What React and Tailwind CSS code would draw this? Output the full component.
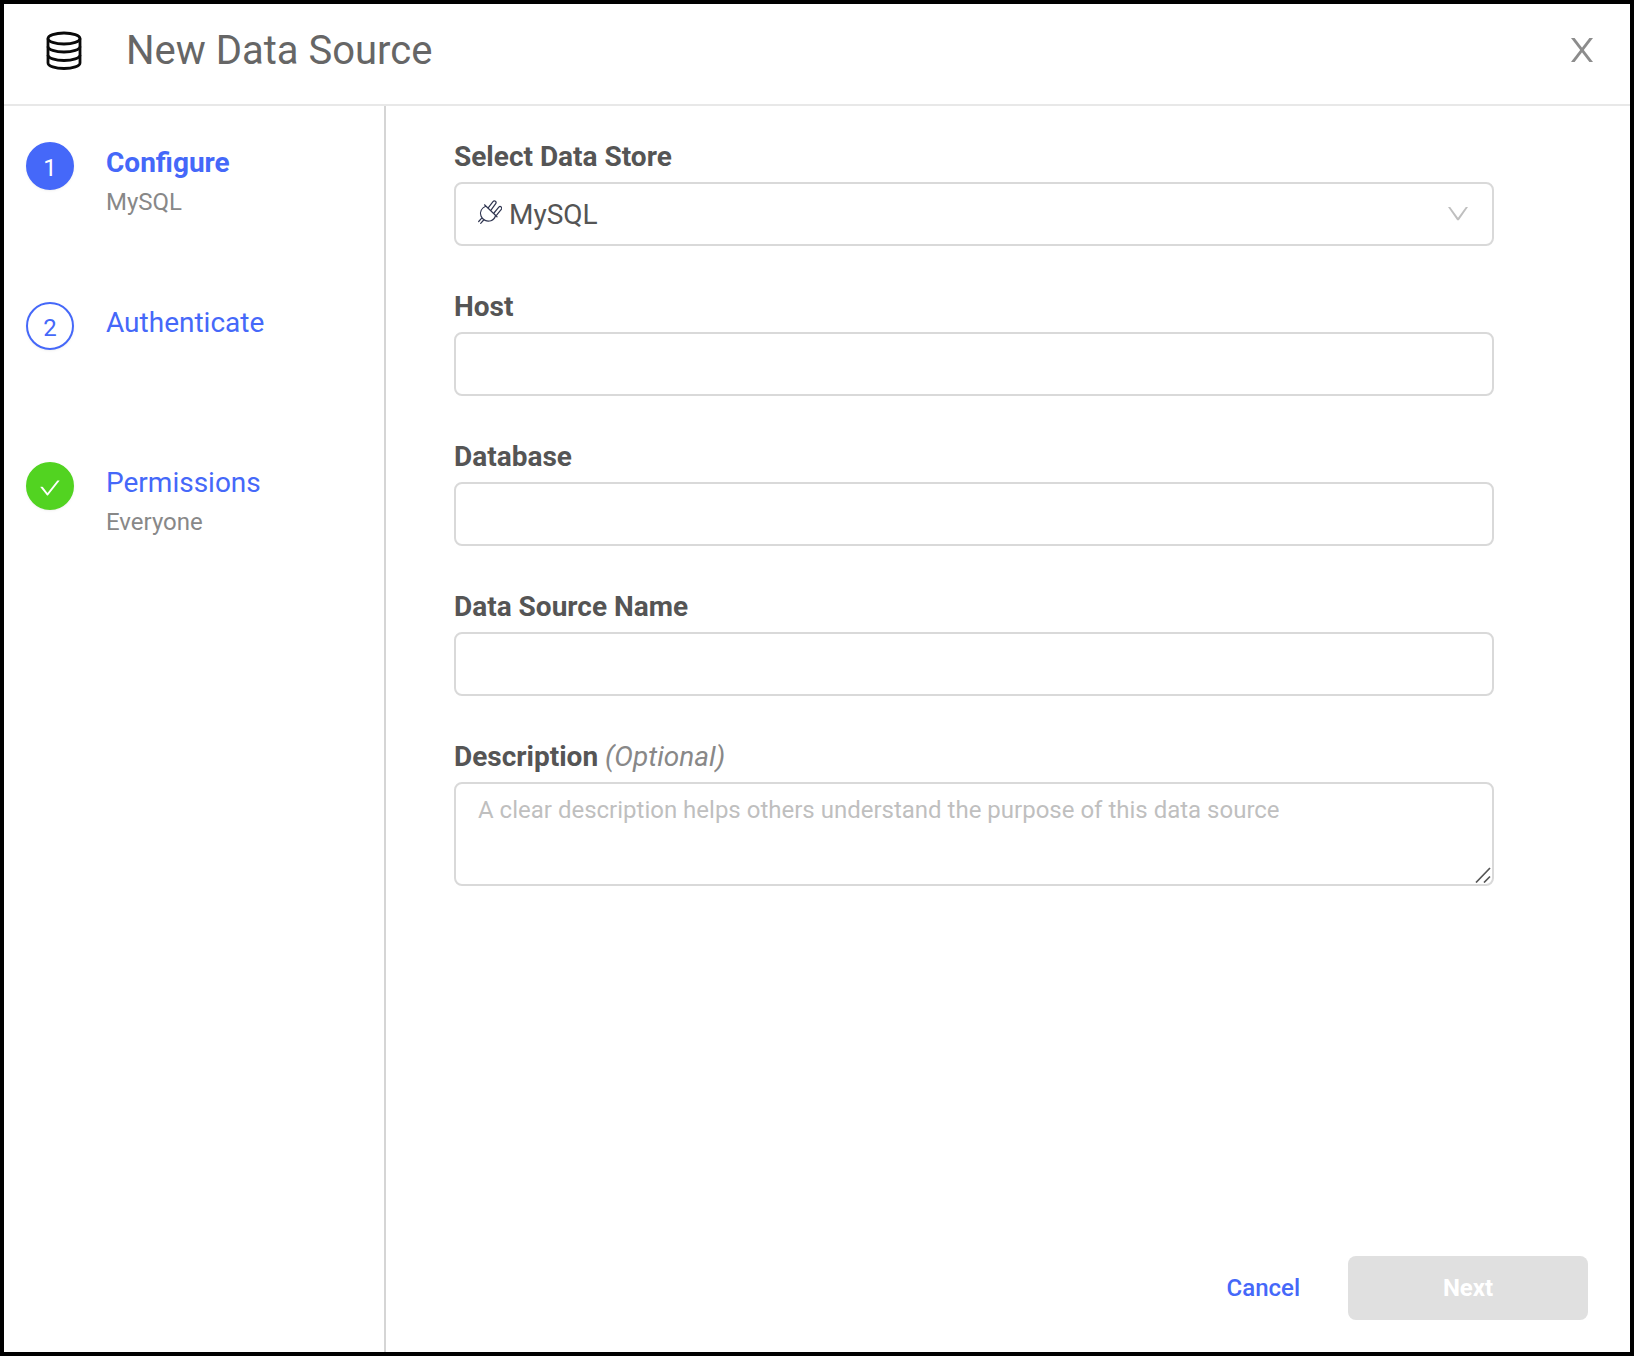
import { useState } from "react";
import { AiOutlineCheck } from "react-icons/ai";

const STEPS = [
  { id: 1, title: "Configure", subtitle: "MySQL", status: "active" },
  { id: 2, title: "Authenticate", subtitle: "", status: "pending" },
  { id: 3, title: "Permissions", subtitle: "Everyone", status: "done" },
];

const TEXT_FIELDS = [
  { name: "host", label: "Host" },
  { name: "database", label: "Database" },
  { name: "dataSourceName", label: "Data Source Name" },
];

const BADGE_STYLES = {
  active: "bg-[#4568f9] border-[#4568f9] text-white",
  pending: "bg-white border-[#4568f9] text-[#4568f9]",
  done: "bg-[#52d321] border-[#52d321] text-white",
};

const DatabaseIcon = () => (
  <svg viewBox="0 0 36 40" className="w-9 h-10" fill="none" stroke="#0a0a0a" strokeWidth="2.8">
    <ellipse cx="18" cy="7.5" rx="16" ry="5.5" />
    <path d="M2 7.5V32c0 3 7.2 5.5 16 5.5S34 35 34 32V7.5" />
    <path d="M2 15.5c0 3 7.2 5.5 16 5.5s16-2.5 16-5.5M2 24c0 3 7.2 5.5 16 5.5s16-2.5 16-5.5" />
  </svg>
);

const CloseIcon = () => (
  <svg viewBox="0 0 32 32" className="w-8 h-8" fill="currentColor">
    <path d="M5 3h3.600L27 27h-3.600z" />
    <path d="M23.400 3H27L8.600 27H5z" />
  </svg>
);

const ChevronIcon = () => (
  <svg viewBox="0 0 24 24" className="w-6 h-6" fill="currentColor">
    <path d="M2 5h2.200L12 15.800 19.800 5H22L12.800 18.200h-1.600z" />
  </svg>
);

const PlugIcon = () => (
  <svg viewBox="0 0 24 24" className="w-6 h-6" fill="none" stroke="#2f3550" strokeWidth="1.2" strokeLinecap="round" strokeLinejoin="round">
    <path d="M6.5 4.8 19 16.8M8 6C3.5 8 1.500 12 3 16c1.500 4.200 6 6 10 4.700 2.200-.7 3.800-2.200 4.500-5.200" />
    <path d="M10.200 7.800l4.800-6.100c1.500-1.800 4 .2 2.700 2L13 10.200M16 13l4.800-5.800c1.500-1.700 3.900.300 2.500 2.100l-4.700 5.900" />
    <path d="M.7 21.500l3-3.300M2.700 23.300l3-3.300" />
  </svg>
);

const Step = ({ step }) => (
  <li className="flex h-40 gap-8">
    <span className={`flex w-12 h-12 shrink-0 items-center justify-center rounded-full border-2 pt-1 text-2xl shadow-sm shadow-black/5 ${BADGE_STYLES[step.status]}`}>
      {step.status === "done" ? <AiOutlineCheck /> : step.id}
    </span>
    <a href="#" className="block">
      <span className={`block text-[28px] leading-[42px] text-[#4568f9] ${step.status === "active" ? "font-bold" : ""}`}>
        {step.title}
      </span>
      <span className="block text-2xl leading-9 text-[#888888]">{step.subtitle}</span>
    </a>
  </li>
);

const NewDataSource = () => {
  const [store, setStore] = useState("MySQL");
  const [formData, setFormData] = useState({});

  const handleChange = (e) => {
    const { name, value } = e.target;
    setFormData((prev) => ({ ...prev, [name]: value }));
  };

  return (
    <div className="flex min-h-screen flex-col border-4 border-black bg-white font-['Roboto',sans-serif]">
      {/* Header */}
      <header className="flex h-[102px] items-center border-b-2 border-[#e8e8e8] pl-[42px] pr-8 pb-1.5">
        <DatabaseIcon />
        <h1 className="ml-11 flex-1 text-[40px] leading-12 text-[#666666]">New Data Source</h1>
        <button type="button" aria-label="Close" className="text-[#8c8c8c]">
          <CloseIcon />
        </button>
      </header>

      <div className="flex flex-1">
        {/* Steps */}
        <nav className="w-[382px] shrink-0 border-r-2 border-[#d5d5d5] pl-[22px] pt-9">
          <ol>
            {STEPS.map((step) => (
              <Step key={step.id} step={step} />
            ))}
          </ol>
        </nav>

        {/* Form */}
        <form className="flex flex-1 flex-col pl-[68px] pt-8" onSubmit={(e) => e.preventDefault()}>
          <div className="flex flex-col gap-[42px] pr-[136px] text-[28px] text-[#555555]">
            <div>
              <label htmlFor="store" className="mb-1.5 block font-bold leading-[38px]">Select Data Store</label>
              <div className="relative">
                <span className="pointer-events-none absolute left-6 top-[18px]"><PlugIcon /></span>
                <select
                  id="store"
                  value={store}
                  onChange={(e) => setStore(e.target.value)}
                  className="block h-16 w-full appearance-none rounded-lg border-2 border-[#d9d9d9] bg-white pl-[53px] pr-16 pt-0.5"
                >
                  <option>MySQL</option>
                </select>
                <span className="pointer-events-none absolute right-6 top-5 text-[#bfbfbf]"><ChevronIcon /></span>
              </div>
            </div>

            {TEXT_FIELDS.map((field) => (
              <div key={field.name}>
                <label htmlFor={field.name} className="mb-1.5 block font-bold leading-[38px]">{field.label}</label>
                <input
                  id={field.name}
                  name={field.name}
                  value={formData[field.name] || ""}
                  onChange={handleChange}
                  className="block h-16 w-full rounded-lg border-2 border-[#d9d9d9] px-[22px]"
                />
              </div>
            ))}

            <div>
              <label htmlFor="description" className="mb-1.5 block font-bold leading-[38px]">
                Description <em className="font-normal text-[#888888]">(Optional)</em>
              </label>
              <div className="relative">
                <textarea
                  id="description"
                  name="description"
                  value={formData.description || ""}
                  onChange={handleChange}
                  placeholder="A clear description helps others understand the purpose of this data source"
                  className="block h-[104px] w-full resize-none rounded-lg border-2 border-[#d9d9d9] px-[22px] py-2 text-2xl leading-9 placeholder:text-[#bfbfbf]"
                />
                <svg viewBox="0 0 16 16" className="pointer-events-none absolute bottom-[3px] right-[3px] w-4 h-4" stroke="#555555" strokeWidth="1.7">
                  <path d="M1 15.5 15 1M9 15.5 15 9.5" />
                </svg>
              </div>
            </div>
          </div>

          {/* Buttons */}
          <div className="mt-auto flex items-center justify-end gap-12 pb-8 pr-[42px] pt-8 text-2xl">
            <button type="button" className="font-medium text-[#4568f9]">Cancel</button>
            <button type="submit" disabled className="h-16 w-60 rounded-lg bg-[#e0e0e0] font-bold text-white">Next</button>
          </div>
        </form>
      </div>
    </div>
  );
};

export default function App() {
  return <NewDataSource />;
}
